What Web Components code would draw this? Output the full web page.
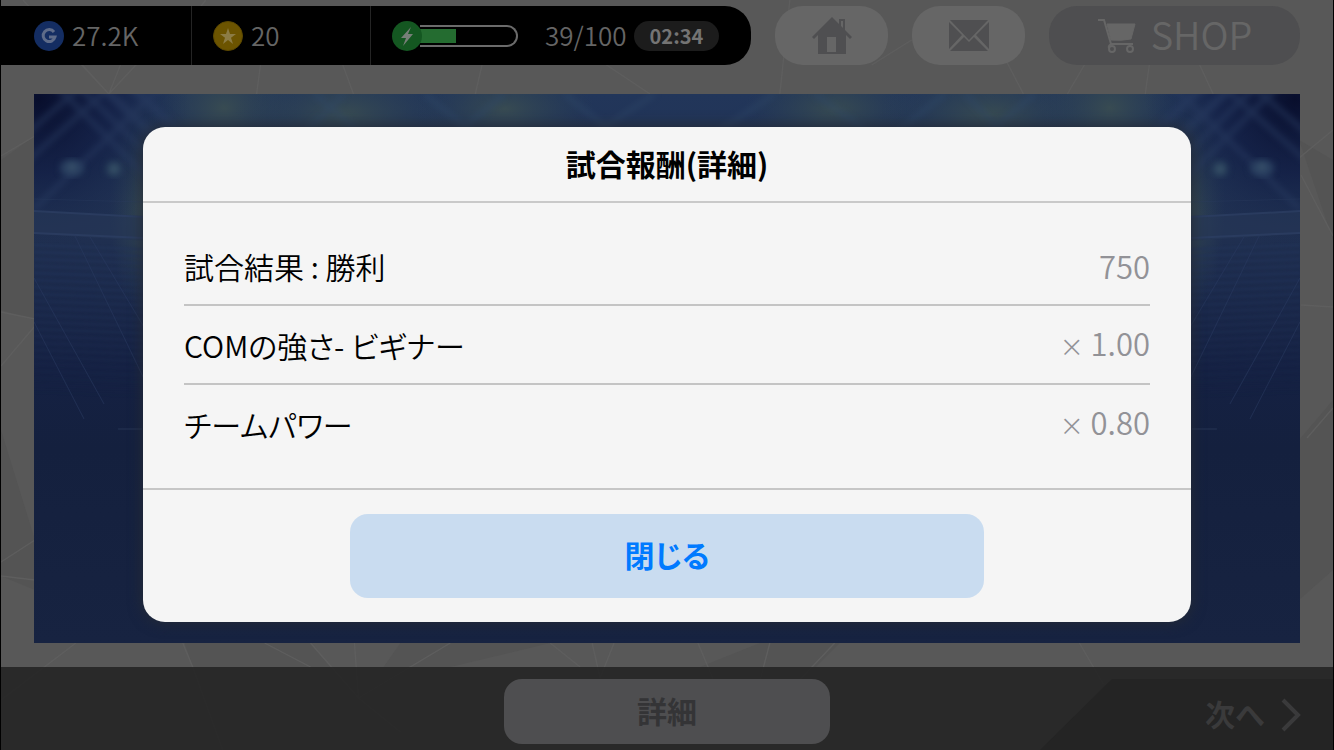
<!DOCTYPE html>
<html lang="ja">
<head>
<meta charset="utf-8">
<meta name="viewport" content="width=device-width, initial-scale=1">
<title>試合報酬</title>
<style>
html,body{margin:0;height:100%;background:#000}
body{font-family:"Noto Sans CJK JP",sans-serif}
</style>
</head>
<body>
<game-app>
  <game-header slot="header"></game-header>
  <stadium-view slot="stage"></stadium-view>
  <game-footer slot="footer"></game-footer>
  <reward-dialog slot="dialog">
    <span slot="title">試合報酬(詳細)</span>
    <span slot="close">閉じる</span>
  </reward-dialog>
</game-app>
<script>
const define = (name, html) => customElements.define(name, class extends HTMLElement {
  constructor() {
    super();
    const t = document.createElement('template');
    t.innerHTML = html;
    this.attachShadow({mode: 'open'}).append(t.content.cloneNode(true));
  }
});

define('poly-backdrop', `
<style>:host{display:block}svg{display:block;width:100%;height:100%}</style>
<svg viewBox="0 0 1334 750" preserveAspectRatio="none" aria-hidden="true">
  <g fill="#545454"><path d="M0 430L34 540V590L0 576zM1300 440L1334 400V570L1300 600zM184 643H310L358 698 300 667H192zM400 643L360 700 450 667 550 643zM760 643H840L740 743 700 667z"/><path d="M1300 140L1334 240V160zM0 160L34 136V320L0 310z"/></g>
  <g stroke="#5e5e5e" stroke-width="1.4" fill="none">
    <path d="M22 0L108 94 136 64M80 64L108 94 120 64M0 156L34 136M0 312L34 319M0 366L34 326M260 64L256 94M342 64L353 94M482 64L475 94M605 64L650 94M205 0L190 20M790 0L780 94M872 65L912 40M1000 48L1024 94M1085 65L1068 94M1150 65L1146 94M1200 64L1214 94M1300 158L1334 130M1302 175L1334 236M1302 305L1334 307M1308 438L1334 408"/>
    <path d="M0 562L34 540M0 576L34 580M75 643L0 700M182 643L192 667L222 750M264 643L310 667M310 643L358 698M354 643L358 698 400 732M450 643L358 698M550 643L580 667M592 643L600 678M614 643L600 678M698 643L740 743M770 643L755 700M835 643L740 743M1080 643L1104 684"/>
  </g>
</svg>`);

define('game-app', `
<style>
:host{display:grid;grid-template-rows:auto 1fr auto;min-height:100vh;box-sizing:border-box;position:relative;border:0 solid #000;border-width:0 1px;background:#585858;isolation:isolate}
poly-backdrop{position:absolute;inset:0;z-index:-1}
main{display:grid;padding:0 33px 24px}
</style>
<poly-backdrop></poly-backdrop>
<slot name="header"></slot>
<main><slot name="stage"></slot></main>
<slot name="footer"></slot>
<slot name="dialog"></slot>`);

define('game-header', `
<style>
:host{display:flex;gap:24px;padding:6px 33px 29px 0;color:#666}
button{border:0;margin:0;padding:0;height:59px;width:113px;border-radius:28px;background:#666;color:#4f4f51;display:flex;align-items:center;justify-content:center;font:inherit}
button svg{display:block}
.shop{width:251px;background:#4e4e50;color:#666;font-size:38px;line-height:48px;font-weight:350;gap:14px}
.shop span{padding-bottom:4px}
status-bar{flex:1}
</style>
<status-bar></status-bar>
<button type="button" aria-label="ホーム"><svg width="40" height="38" viewBox="0 0 40 38"><path fill="currentColor" fill-rule="evenodd" d="M20 0L27 7V2H33V13L40 20 38 22 34 18V37H6V18L2 22 0 20zM29 4V9L31 11V4zM15 20V35H24V20z"/></svg></button>
<button type="button" aria-label="メール"><svg width="44" height="32" viewBox="0 0 44 32"><path fill="currentColor" d="M3 0H41L22 20zM2 2L15 15 2 29zM42 2V29L29 15zM3 31L17 17 22 22 27 17 41 31z"/></svg></button>
<button type="button" class="shop"><svg width="40" height="36" viewBox="0 0 40 36" fill="none" stroke="currentColor" stroke-width="2"><path d="M1 2H7L14 26H36M14 26Q11 28 12 30"/><path d="M10 6H38L34 21Q24 23 14 22z" fill="currentColor" stroke-width="1"/><circle cx="15" cy="31" r="3"/><circle cx="33" cy="31" r="3"/></svg><span>SHOP</span></button>`);

define('status-bar', `
<style>
:host{display:block;background:#000;border-radius:0 26px 26px 0;color:#656565;font-size:26px;line-height:32px;font-weight:350}
ul{display:grid;grid-template-columns:191fr 179fr 380fr;height:59px;margin:0;padding:0;list-style:none}
li{display:flex;align-items:center;gap:8px;box-sizing:border-box;padding-left:21px;border-right:1px solid #242424}
li:first-child{padding-left:33px}
li:last-child{border:0;gap:0}
li span{padding-bottom:2px}
svg{display:block;flex:none}
.gauge{width:98px;height:22px;box-sizing:border-box;border:2px solid #6b6b6b;border-left:0;border-radius:0 11px 11px 0;margin:0 27px 0 -2px}
li .gauge{padding:2px 0}
.gauge i{display:block;width:38%;height:14px;background:#246c30}
.bolt{position:relative}
time{margin-left:7px;padding:0 16px;border-radius:15px;background:#1c1c1c;font-size:20px;line-height:30px;font-weight:700;color:#747474}
</style>
<ul>
<li><svg width="30" height="30" viewBox="0 0 30 30" aria-hidden="true"><circle cx="15" cy="15" r="15" fill="#142d62"/><path d="M20 11A6 6 0 1 0 21 16H15" fill="none" stroke="#5f6c89" stroke-width="3"/></svg><span>27.2K</span></li>
<li><svg width="30" height="30" viewBox="0 0 30 30" aria-hidden="true"><circle cx="15" cy="15" r="14.5" fill="#6c5400" stroke="#5c4800"/><path fill="#8c7c45" d="M15 7l2 6 6 .1-5 3.600 2 6.200-5-3.800-5 3.800 2-6.200-5-3.600 6-.1z"/></svg><span>20</span></li>
<li><svg class="bolt" width="30" height="30" viewBox="0 0 30 30" aria-hidden="true"><circle cx="15" cy="15" r="15" fill="#145721"/><path fill="#777f78" d="M19 6L9 17H14L11 25 21 13H16z"/></svg><span class="gauge"><i></i></span><span>39/100</span><time>02:34</time></li>
</ul>`);

const rows = (n, y, step, dy) => Array.from({length: n}, (_, i) =>
  `<path d="M0 ${y + i * step}L130 ${y + dy + i * step}" opacity="${(1 - i / n) * .7}"/>`).join('');
const side = `
  <path d="M0 0H170L108 200H0z" fill="url(#corner)"/>
  <g filter="url(#soft)" fill="none" stroke="#2a3d62" opacity=".55">
    <path d="M-10 70L80 -10M-10 42L50 -10M20 -10L120 90M42 -10L140 86M0 115L135 -15" stroke-width="5"/>
    <path d="M65 -10L150 70M95 -10L170 62" stroke-width="8"/>
  </g>
  <g filter="url(#soft)"><ellipse cx="38" cy="74" rx="12" ry="9" fill="#2a4060"/><ellipse cx="80" cy="75" rx="8" ry="8" fill="#2a425c"/><circle cx="38" cy="73" r="3" fill="#40596e"/><circle cx="80" cy="75" r="3" fill="#40596e"/></g>
  <path d="M0 117L130 123V148L0 140z" fill="#263756" opacity=".6"/>
  <g stroke="#2c3e62" fill="none" opacity=".8"><path d="M0 105L110 108" opacity=".4"/><path d="M0 117L110 123M0 139L110 144" stroke-width="2"/></g>
  <g stroke="#22345a" stroke-width="2" fill="none" filter="url(#fine)">${rows(22, 151, 7, 5)}</g>
  <g stroke="#293a60" fill="none" opacity=".55"><path d="M40 140L110 285M56 143L120 250M0 184L70 310M0 228L50 325"/></g>`;
define('stadium-view', `
<style>:host{display:grid;min-height:200px;position:relative}svg{position:absolute;inset:0;width:100%;height:100%}</style>
<svg viewBox="0 0 1265 549" preserveAspectRatio="none" role="img" aria-label="スタジアム">
<defs>
  <linearGradient id="night" x2="0" y2="1"><stop stop-color="#22365a"/><stop offset=".25" stop-color="#203051"/><stop offset=".5" stop-color="#152143"/><stop offset=".65" stop-color="#14203e"/><stop offset="1" stop-color="#172341"/></linearGradient>
  <radialGradient id="corner" gradientUnits="userSpaceOnUse" cx="5" cy="5" r="150"><stop stop-color="#080e2c"/><stop offset=".5" stop-color="#101b42" stop-opacity=".7"/><stop offset="1" stop-color="#192b4e" stop-opacity="0"/></radialGradient>
  <radialGradient id="lamp"><stop stop-color="#384b52"/><stop offset="1" stop-color="#2b4054" stop-opacity="0"/></radialGradient>
  <filter id="soft" color-interpolation-filters="sRGB"><feGaussianBlur stdDeviation="3"/></filter><filter id="fine" color-interpolation-filters="sRGB"><feGaussianBlur stdDeviation=".8"/></filter>
  <g id="stand">${side}</g>
</defs>
<rect width="1265" height="549" fill="url(#night)"/>
<g fill="url(#lamp)"><ellipse cx="190" cy="14" rx="75" ry="60"/><ellipse cx="310" cy="20" rx="110" ry="50"/><ellipse cx="470" cy="15" rx="90" ry="45"/><ellipse cx="800" cy="15" rx="90" ry="45"/><ellipse cx="955" cy="20" rx="110" ry="50"/><ellipse cx="1075" cy="14" rx="75" ry="60"/><ellipse cx="110" cy="110" rx="35" ry="110"/><ellipse cx="1155" cy="110" rx="35" ry="110"/></g>
<g stroke="#2f4868" stroke-width="5" opacity=".5" filter="url(#soft)"><path d="M260 50L310 0M280 0L340 50M390 0L440 40M410 50L470 0M530 0L580 40M680 40L740 0M780 0L850 50M860 40L910 0M930 0L980 50M940 50L1000 0M560 40L620 0"/></g>
<use href="#stand"/><use href="#stand" transform="matrix(-1 0 0 1 1265 0)"/>
<path d="M84 335H108M1157 335H1182" stroke="#263555"/>
</svg>`);

define('game-footer', `
<style>
:host{display:grid;grid-template-columns:1fr 326px 1fr;height:83px;background:rgba(35,35,35,.87);font-size:30px;line-height:40px}
button{border:0;margin:0;padding:0;font:inherit;font-weight:700}
.detail{grid-column:2;height:65px;align-self:center;margin-top:6px;padding-bottom:4px;border-radius:18px;background:#4e4e50;color:#343436}
.next{grid-column:3;justify-self:end;align-self:end;width:293px;height:71px;display:flex;align-items:center;justify-content:flex-end;gap:16px;padding-right:32px;background:#242424;color:#3a3a3b;clip-path:polygon(72px 0,100% 0,100% 100%,0 100%)}
.next span{padding-bottom:4px}
</style>
<button type="button" class="detail">詳細</button>
<button type="button" class="next"><span>次へ</span><svg width="20" height="34" viewBox="0 0 20 34" fill="none" stroke="currentColor" stroke-width="4" aria-hidden="true"><path d="M2 2L17 17 2 32"/></svg></button>`);

define('reward-dialog', `
<style>
:host{position:absolute;inset:0;display:flex;align-items:center;padding:0 142px 1px}
section{flex:1;background:#f5f5f5;border-radius:22px;box-shadow:0 0 14px 1px #242a35;color:#111}
h2{margin:0;height:74px;box-sizing:border-box;padding-bottom:2px;display:flex;align-items:center;justify-content:center;font-size:30px;line-height:40px;font-weight:700;color:#000}
.body{padding:24px 41px;border-top:2px solid #c9c9c9}
footer{border-top:2px solid #c6c6c6;padding:24px 207px}
button{display:block;width:100%;height:84px;border:0;padding:0 0 4px;border-radius:18px;background:#c9dcf0;color:#007aff;font:inherit;font-size:30px;line-height:40px;font-weight:700;font-feature-settings:"palt"}
</style>
<section role="dialog" aria-modal="true" aria-labelledby="t">
<h2 id="t"><slot name="title"></slot></h2>
<div class="body"><reward-table></reward-table></div>
<footer><button type="button"><slot name="close"></slot></button></footer>
</section>`);

define('reward-table', `
<style>
:host{display:block}
table{width:100%;border-collapse:separate;border-spacing:0;font-size:30px;line-height:40px}
th,td{height:79px;box-sizing:border-box;padding:0;border-bottom:2px solid #c4c4c4;font-weight:350;vertical-align:middle}
th{text-align:left;color:#000;font-feature-settings:"palt"}
td{text-align:right;color:#929297;font-size:31px}
small{font-size:24px}
tr:last-child>*{border-color:transparent}
</style>
<table><tbody>
<tr><th scope="row">試合結果 : 勝利</th><td>750</td></tr>
<tr><th scope="row">COMの強さ- ビギナー</th><td><small>×</small> 1.00</td></tr>
<tr><th scope="row">チームパワー</th><td><small>×</small> 0.80</td></tr>
</tbody></table>`);
</script>
</body>
</html>
